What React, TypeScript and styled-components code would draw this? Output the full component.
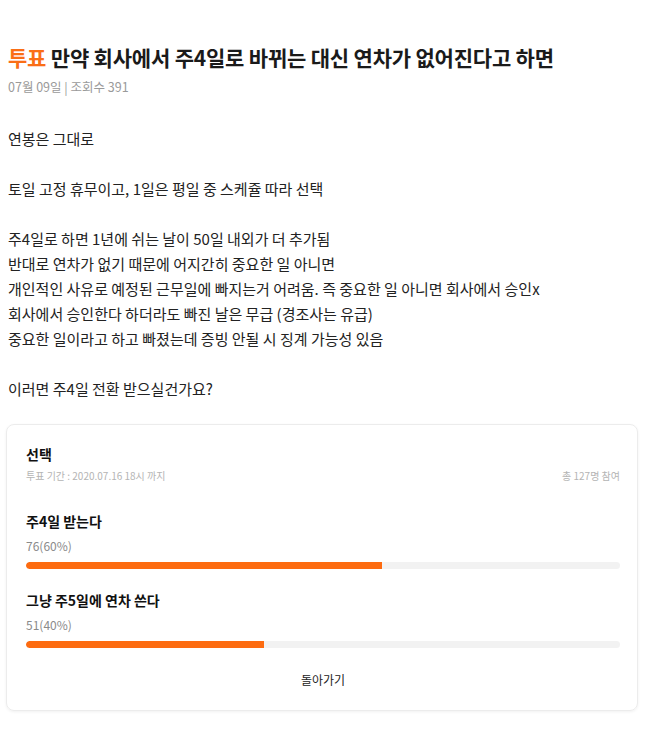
import React from "react";
import styled, { createGlobalStyle } from "styled-components";

const GlobalStyle = createGlobalStyle`
  body {
    margin: 0;
    background: #ffffff;
    font-family: "Noto Sans CJK KR", "Noto Sans", sans-serif;
    color: #222;
  }
`;

const options: PollOption[] = [
  { label: "주4일 받는다", votes: 76, percent: 60 },
  { label: "그냥 주5일에 연차 쓴다", votes: 51, percent: 40 },
];

const bodyLines = [
  "연봉은 그대로",
  "",
  "토일 고정 휴무이고, 1일은 평일 중 스케쥴 따라 선택",
  "",
  "주4일로 하면 1년에 쉬는 날이 50일 내외가 더 추가됨",
  "반대로 연차가 없기 때문에 어지간히 중요한 일 아니면",
  "개인적인 사유로 예정된 근무일에 빠지는거 어려움. 즉 중요한 일 아니면 회사에서 승인x",
  "회사에서 승인한다 하더라도 빠진 날은 무급 (경조사는 유급)",
  "중요한 일이라고 하고 빠졌는데 증빙 안될 시 징계 가능성 있음",
  "",
  "이러면 주4일 전환 받으실건가요?",
];

const App: React.FC = () => {
  return (
    <Root>
      <GlobalStyle />
      <Title>
        <Tag>투표</Tag> 만약 회사에서 주4일로 바뀌는 대신 연차가 없어진다고 하면
      </Title>
      <Meta>07월 09일 | 조회수 391</Meta>
      <Body>
        {bodyLines.map((line, i) => (
          <Line key={i}>{line || "\u00a0"}</Line>
        ))}
      </Body>
      <Card>
        <CardTitle>선택</CardTitle>
        <CardInfo>
          <span>투표 기간 : 2020.07.16 18시 까지</span>
          <span>총 127명 참여</span>
        </CardInfo>
        {options.map((opt) => (
          <Option key={opt.label}>
            <OptionLabel>{opt.label}</OptionLabel>
            <OptionCount>
              {opt.votes}({opt.percent}%)
            </OptionCount>
            <Track>
              <Fill style={{ width: `${opt.percent}%` }} />
            </Track>
          </Option>
        ))}
        <BackButton>돌아가기</BackButton>
      </Card>
    </Root>
  );
};

export default App;

interface PollOption {
  label: string;
  votes: number;
  percent: number;
}

const Root = styled.div`
  width: 669px;
  padding: 40px 8px 20px 8px;
  box-sizing: border-box;
`;
const Title = styled.h1`
  margin: 0;
  font-size: 21px;
  font-weight: 700;
  line-height: 34px;
  color: #1a1a1a;
  letter-spacing: -0.2px;
`;
const Tag = styled.span`
  color: #fa6e16;
`;
const Meta = styled.div`
  margin-top: 4px;
  font-size: 12.5px;
  line-height: 18px;
  color: #9a9a9a;
`;
const Body = styled.div`
  margin-top: 30px;
  font-size: 15px;
  line-height: 25px;
  color: #222;
`;
const Line = styled.div`
  white-space: pre;
`;
const Card = styled.div`
  margin-top: 23px;
  margin-left: -2px;
  width: 632px;
  box-sizing: border-box;
  border: 1px solid #ececec;
  border-radius: 8px;
  box-shadow: 0 1px 3px rgba(0, 0, 0, 0.06);
  padding: 18px 17px 21px 19px;
  display: flex;
  flex-direction: column;
`;
const CardTitle = styled.div`
  font-size: 14px;
  font-weight: 700;
  line-height: 22px;
  color: #111;
`;
const CardInfo = styled.div`
  display: flex;
  justify-content: space-between;
  margin-top: 3px;
  font-size: 10px;
  line-height: 16px;
  color: #b4b4b4;
`;
const Option = styled.div`
  margin-top: 26px;
  display: flex;
  flex-direction: column;
  & + & {
    margin-top: 20px;
  }
`;
const OptionLabel = styled.div`
  font-size: 14px;
  font-weight: 700;
  line-height: 22px;
  color: #111;
`;
const OptionCount = styled.div`
  margin-top: 5px;
  font-size: 12px;
  line-height: 18px;
  color: #8a8a8a;
`;
const Track = styled.div`
  margin-top: 7px;
  height: 7px;
  border-radius: 4px;
  background: #f2f2f2;
  overflow: hidden;
`;
const Fill = styled.div`
  height: 100%;
  background: #fd6b10;
  border-radius: 4px 0 0 4px;
`;
const BackButton = styled.button`
  align-self: center;
  margin-top: 23px;
  background: transparent;
  border: none;
  padding: 0;
  font-family: "Noto Sans CJK KR", sans-serif;
  font-size: 12px;
  line-height: 18px;
  color: #222;
  cursor: pointer;
`;
